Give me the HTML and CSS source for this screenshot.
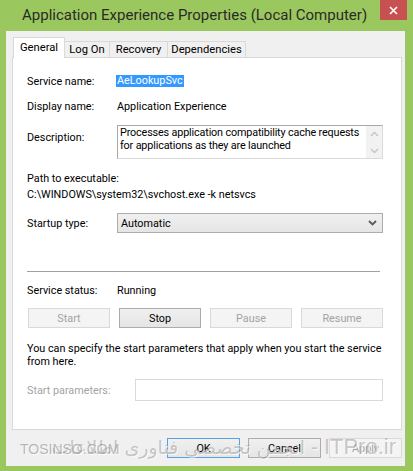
FILE: index.html
```html
<!DOCTYPE html>
<html>
<head>
<meta charset="utf-8">
<link rel="stylesheet" href="styles.css">
</head>
<body>
<div class="window">
  <div class="titlebar">
    <span class="title">Application Experience Properties (Local Computer)</span>
    <div class="close">
      <svg width="9" height="9" viewBox="0 0 9 9"><path d="M1 1L8 8M8 1L1 8" stroke="#fff" stroke-width="1.6"/></svg>
    </div>
  </div>
  <div class="client">
    <div class="tabs">
      <div class="tab active">General</div>
      <div class="tab">Log On</div>
      <div class="tab">Recovery</div>
      <div class="tab">Dependencies</div>
    </div>
    <div class="panel">
      <div class="row r1"><span class="lbl">Service name:</span><span class="sel">AeLookupSvc</span></div>
      <div class="row r2"><span class="lbl">Display name:</span><span>Application Experience</span></div>
      <div class="row r3">
        <span class="lbl lbl-desc">Description:</span>
        <div class="desc">
          <div class="desc-text">Processes application compatibility cache requests<br>for applications as they are launched</div>
          <div class="vscroll">
            <svg width="9" height="6" viewBox="0 0 9 6"><path d="M1 5L4.5 1.5L8 5" fill="none" stroke="#c4c4c4" stroke-width="1.4"/></svg>
            <svg width="9" height="6" viewBox="0 0 9 6"><path d="M1 1L4.5 4.5L8 1" fill="none" stroke="#c4c4c4" stroke-width="1.4"/></svg>
          </div>
        </div>
      </div>
      <div class="path">
        <div>Path to executable:</div>
        <div>C:\WINDOWS\system32\svchost.exe -k netsvcs</div>
      </div>
      <div class="row r4">
        <span class="lbl">Startup type:</span>
        <div class="select">
          <span>Automatic</span>
          <svg width="9" height="6" viewBox="0 0 9 6"><path d="M1 1L4.5 4.5L8 1" fill="none" stroke="#5a5a5a" stroke-width="1.8"/></svg>
        </div>
      </div>
      <div class="sep"></div>
      <div class="row r5"><span class="lbl">Service status:</span><span>Running</span></div>
      <div class="btnrow">
        <div class="btn disabled">Start</div>
        <div class="btn">Stop</div>
        <div class="btn disabled">Pause</div>
        <div class="btn disabled">Resume</div>
      </div>
      <p class="note">You can specify the start parameters that apply when you start the service<br>from here.</p>
      <div class="row r6">
        <span class="lbl lbl-params">Start parameters:</span>
        <div class="input"></div>
      </div>
    </div>
    <div class="footer">
      <div class="btn fbtn default">OK</div>
      <div class="btn fbtn">Cancel</div>
      <div class="btn fbtn disabled">Apply</div>
    </div>
  </div>
  <div class="wm-main" dir="rtl"><span class="wm-big">ITPro.ir</span> - انجمن تخصصی فناوری اطلاعات</div>
  <div class="wm-left">TOSINSO.COM</div>
</div>
</body>
</html>
```

FILE: styles.css
```css
* { box-sizing: border-box; }
body {
  margin: 0;
  background: #9bc85e;
  font-family: Roboto, "Liberation Sans", sans-serif;
  font-size: 10.8px;
  color: #000;
}
.window {
  position: relative;
  width: 413px;
  height: 471px;
  background: #9bc85e;
  display: flex;
  flex-direction: column;
  padding: 0 8px 5px 6px;
}
.titlebar {
  height: 31px;
  display: flex;
  align-items: flex-start;
  margin-right: -2px;
  flex: none;
}
.title {
  font-size: 15px;
  line-height: 31px;
  color: #2a2a2a;
  padding-left: 16px;
}
.close {
  margin-left: auto;
  width: 27px;
  height: 20px;
  background: #c75050;
  display: flex;
  align-items: center;
  justify-content: center;
}
.client {
  flex: 1;
  background: #f0f0f0;
  padding: 6px 3px 0 6px;
  display: flex;
  flex-direction: column;
}
.tabs {
  display: flex;
  align-items: flex-end;
  height: 20px;
  padding-left: 1px;
  position: relative;
  z-index: 1;
  font-size: 11.2px;
}
.tab {
  height: 16px;
  border: 1px solid #d9d9d9;
  border-bottom: none;
  background: #f0f0f0;
  line-height: 15px;
  text-align: center;
  margin-left: -1px;
}
.tab:nth-child(2) { width: 46px; }
.tab:nth-child(3) { width: 59px; }
.tab:nth-child(4) { width: 79px; }
.tab.active {
  width: 52px;
  height: 21px;
  margin-left: 0;
  background: #fff;
  margin-bottom: -1px;
  line-height: 19px;
}
.panel {
  height: 373px;
  flex: none;
  background: #fff;
  border: 1px solid #d9d9d9;
  padding: 0 18px 0 14px;
}
.row { display: flex; align-items: center; }
.lbl { width: 90px; flex: none; }
.r1 { margin-top: 16px; height: 14px; }
.sel { background: #3399ff; color: #fff; line-height: 12px; padding: 0 1px; margin-left: -1px; }
.r2 { margin-top: 11px; height: 14px; }
.r3 { margin-top: 12px; align-items: flex-start; }
.lbl-desc { padding-top: 6px; line-height: 14px; }
.desc {
  width: 266px;
  height: 34px;
  border: 1px solid;
  border-color: #a8a8a8 #dadada #dadada #a8a8a8;
  display: flex;
}
.desc-text {
  flex: 1;
  line-height: 13px;
  padding-left: 2px;
  white-space: nowrap;
  letter-spacing: -0.15px;
  overflow: hidden;
}
.vscroll {
  width: 16px;
  flex: none;
  background: #f2f2f2;
  display: flex;
  flex-direction: column;
  align-items: center;
  justify-content: space-between;
  padding: 5px 0 4px;
}
.path { margin-top: 12px; line-height: 16px; }
.r4 { margin-top: 10px; }
.select {
  width: 266px;
  height: 20px;
  border: 1px solid #acacac;
  background: linear-gradient(#f0f0f0, #e5e5e5);
  display: flex;
  align-items: center;
  justify-content: space-between;
  padding: 0 5px 0 3px;
}
.sep { margin-top: 38px; width: 353px; height: 1px; background: #a0a0a0; }
.r5 { margin-top: 11px; height: 14px; }
.btnrow {
  margin-top: 11px;
  margin-left: 1px;
  display: grid;
  grid-template-columns: repeat(4, 82px);
  column-gap: 9px;
}
.btn {
  height: 20px;
  border: 1px solid #acacac;
  background: linear-gradient(#f0f0f0, #e5e5e5);
  display: flex;
  align-items: center;
  justify-content: center;
}
.btn.disabled {
  color: #a3a3a3;
  border-color: #d9d9d9;
  background: #f4f4f4;
}
.note { margin: 14px 0 0; line-height: 13px; width: 360px; white-space: nowrap; }
.r6 { margin-top: 11px; }
.lbl-params { width: 108px; color: #a3a3a3; }
.input { width: 248px; height: 22px; border: 1px solid #d9d9d9; background: #fff; }
.footer {
  display: flex;
  justify-content: flex-end;
  gap: 8px;
  margin-top: 8px;
}
.fbtn { width: 73px; }
.btn.default { border-color: #5a9fe0; }
.wm-main {
  position: absolute;
  right: 17px;
  top: 434px;
  font-family: "DejaVu Sans", sans-serif;
  font-size: 19px;
  line-height: 26px;
  color: rgba(150, 150, 150, 0.5);
  text-shadow: 1px 1px 0 rgba(255, 255, 255, 0.7);
  white-space: nowrap;
}
.wm-big { font-family: "Liberation Sans", sans-serif; font-size: 22px; }
.wm-left {
  position: absolute;
  left: 20px;
  top: 440px;
  font-family: "Liberation Sans", sans-serif;
  font-size: 14px;
  line-height: 18px;
  color: rgba(140, 140, 140, 0.6);
  text-shadow: 1px 1px 0 rgba(255, 255, 255, 0.7);
}
```
